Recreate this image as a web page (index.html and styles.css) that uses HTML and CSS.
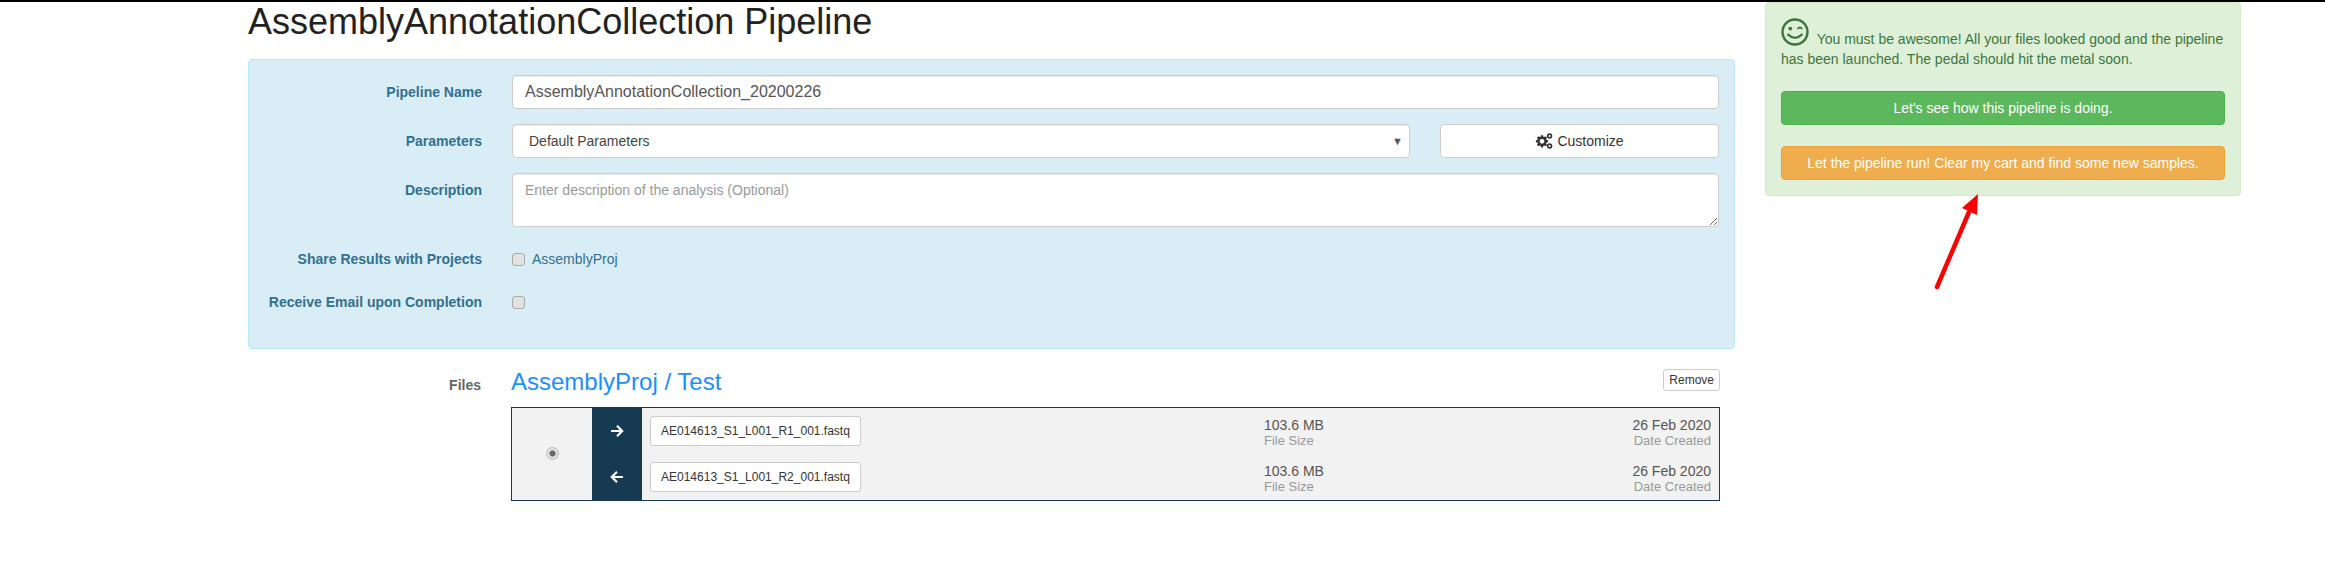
FILE: index.html
```html
<!DOCTYPE html>
<html>
<head>
  <title>AssemblyAnnotationCollection Pipeline</title>
  <link rel="stylesheet" href="styles.css">
</head>
<body>
  <div class="page">
    <div class="main">
      <h1>AssemblyAnnotationCollection Pipeline</h1>
      <form class="panel">
        <div class="row">
          <label>Pipeline Name</label>
          <input type="text" class="control name-input" value="AssemblyAnnotationCollection_20200226">
        </div>
        <div class="row">
          <label>Parameters</label>
          <div class="param-line">
            <div class="control select-box">Default Parameters<span class="caret">▼</span></div>
            <button type="button" class="customize">
              <svg class="gears" viewBox="0 0 18 16" width="18" height="16">
                <path fill="#333" fill-rule="evenodd" d="M6 2.2h2l.3 1.5 1 .4 1.3-.8 1.4 1.4-.8 1.3.4 1 1.5.3v2l-1.5.3-.4 1 .8 1.3-1.4 1.4-1.3-.8-1 .4-.3 1.5H6l-.3-1.5-1-.4-1.3.8L2 11.9l.8-1.3-.4-1L.9 9.3v-2l1.5-.3.4-1L2 4.7l1.4-1.4 1.3.8 1-.4zM7 5.9a2.4 2.4 0 1 0 0 4.8 2.4 2.4 0 0 0 0-4.8z"/>
                <circle cx="14.6" cy="3" r="1.9" fill="none" stroke="#333" stroke-width="1.6"/>
                <circle cx="14.6" cy="13" r="1.9" fill="none" stroke="#333" stroke-width="1.6"/>
              </svg>
              Customize
            </button>
          </div>
        </div>
        <div class="row">
          <label>Description</label>
          <textarea class="control" placeholder="Enter description of the analysis (Optional)"></textarea>
        </div>
        <div class="row check-row first-check">
          <label>Share Results with Projects</label>
          <div class="check-line"><span class="check"></span><span class="check-text">AssemblyProj</span></div>
        </div>
        <div class="row check-row">
          <label>Receive Email upon Completion</label>
          <div class="check-line"><span class="check"></span></div>
        </div>
      </form>

      <div class="files">
        <div class="files-label">Files</div>
        <div>
          <div class="files-head">
            <a class="project">AssemblyProj / Test</a>
            <button type="button" class="remove">Remove</button>
          </div>
          <div class="sample">
            <div class="pick"><span class="radio"></span></div>
            <div class="dirs">
              <svg viewBox="0 0 14 14" width="14" height="14"><path d="M1 7h11M7 1.8l5.2 5.2L7 12.2" fill="none" stroke="#fff" stroke-width="2.2"/></svg>
              <svg viewBox="0 0 14 14" width="14" height="14"><path d="M13 7H2M7 1.8L1.8 7 7 12.2" fill="none" stroke="#fff" stroke-width="2.2"/></svg>
            </div>
            <div class="reads">
              <div class="read">
                <span class="file-name">AE014613_S1_L001_R1_001.fastq</span>
                <div class="size"><b>103.6 MB</b><small>File Size</small></div>
                <div class="date"><b>26 Feb 2020</b><small>Date Created</small></div>
              </div>
              <div class="read">
                <span class="file-name">AE014613_S1_L001_R2_001.fastq</span>
                <div class="size"><b>103.6 MB</b><small>File Size</small></div>
                <div class="date"><b>26 Feb 2020</b><small>Date Created</small></div>
              </div>
            </div>
          </div>
        </div>
      </div>
    </div>

    <div class="side">
      <div class="alert">
        <p>
          <svg class="smile" viewBox="0 0 28 28" width="28" height="28">
            <circle cx="14" cy="14" r="12.5" fill="none" stroke="#3c763d" stroke-width="2.4"/>
            <circle cx="9.3" cy="10.6" r="1.9" fill="#3c763d"/>
            <path d="M16.5 10.8q2.4-2.6 4.8 0" fill="none" stroke="#3c763d" stroke-width="1.8"/>
            <path d="M7.2 16.6q6.8 6.4 13.6 0" fill="none" stroke="#3c763d" stroke-width="2.2" stroke-linecap="round"/>
          </svg>
          You must be awesome! All your files looked good and the pipeline has been launched. The pedal should hit the metal soon.
        </p>
        <button type="button" class="btn green">Let's see how this pipeline is doing.</button>
        <button type="button" class="btn orange">Let the pipeline run! Clear my cart and find some new samples.</button>
      </div>
    </div>
  </div>

  <svg class="red-arrow" viewBox="0 0 60 110" width="60" height="110">
    <path d="M6 102 L38 27" stroke="#f00" stroke-width="4.5" stroke-linecap="round" fill="none"/>
    <path d="M47 9 L46 30 L31 23 Z" fill="#f00"/>
  </svg>
</body>
</html>
```

FILE: styles.css
```css
* {
  box-sizing: border-box;
}

body {
  margin: 0;
  font-family: "Liberation Sans", Arial, sans-serif;
  font-size: 14px;
  color: #333;
  background: #fff;
  border-top: 2px solid #000;
  position: relative;
  overflow: hidden;
}

.page {
  display: flex;
  padding-left: 248px;
  gap: 30px;
  min-height: 571px;
}

.main {
  width: 1487px;
}

h1 {
  margin: 0 0 17px;
  font-size: 36px;
  font-weight: 400;
  line-height: 40px;
  color: #222;
}

.panel {
  height: 290px;
  padding: 15px;
  background: #d9edf7;
  border: 1px solid #bce8f1;
  border-radius: 4px;
}

.row {
  display: grid;
  grid-template-columns: 217px 1fr;
  column-gap: 31px;
  margin-bottom: 15px;
}

.row label {
  padding-top: 7px;
  font-weight: 700;
  line-height: 20px;
  text-align: right;
  color: #31708f;
  margin-right: -1px;
}

.control {
  display: block;
  width: 100%;
  height: 34px;
  padding: 6px 12px;
  font: 14px/20px "Liberation Sans", Arial, sans-serif;
  color: #555;
  background: #fff;
  border: 1px solid #ccc;
  border-radius: 4px;
  box-shadow: inset 0 1px 1px rgba(0, 0, 0, 0.075);
}

.name-input {
  font-size: 16px;
}

textarea.control {
  height: 54px;
}

textarea.control::placeholder {
  color: #999;
}

.param-line {
  display: flex;
  gap: 30px;
}

.select-box {
  width: 898px;
  padding: 6px 16px;
  color: #444;
  display: flex;
  justify-content: space-between;
  align-items: center;
}

.caret {
  font-size: 11px;
  color: #555;
  margin-right: -10px;
}

.customize {
  flex: 1;
  display: flex;
  align-items: center;
  justify-content: center;
  gap: 4px;
  font: 14px "Liberation Sans", Arial, sans-serif;
  color: #333;
  background: #fff;
  border: 1px solid #ccc;
  border-radius: 4px;
}

.check-row {
  margin-bottom: 0;
  height: 43px;
}

.first-check {
  margin-top: 22px;
}

.check-row label {
  padding-top: 0;
}

.check-line {
  display: flex;
  align-items: center;
  height: 20px;
}

.check {
  width: 13px;
  height: 13px;
  background: #e2e2e2;
  border: 1px solid #aaa;
  border-radius: 3px;
}

.check-text {
  margin-left: 7px;
  color: #31708f;
}

.files {
  display: grid;
  grid-template-columns: 233px 1209px;
  column-gap: 30px;
  padding-top: 20px;
}

.files-label {
  padding-top: 6px;
  font-weight: 700;
  color: #666;
  text-align: right;
  line-height: 20px;
}

.files-head {
  display: flex;
  justify-content: space-between;
  align-items: flex-start;
  height: 38px;
}

.project {
  font-size: 24px;
  line-height: 26px;
  color: #1890ff;
}

.remove {
  height: 22px;
  padding: 0 5px;
  font: 12px "Liberation Sans", Arial, sans-serif;
  color: #333;
  background: #fff;
  border: 1px solid #ccc;
  border-radius: 3px;
}

.sample {
  display: flex;
  height: 94px;
  background: #f2f2f2;
  border: 1px solid #153a52;
}

.pick {
  width: 80px;
  display: flex;
  align-items: center;
  justify-content: center;
}

.radio {
  width: 13px;
  height: 13px;
  margin-bottom: 1px;
  border-radius: 50%;
  border: 1px solid #bbb;
  background: radial-gradient(circle, #666 0, #666 2.5px, #e0e0e0 3.5px);
}

.dirs {
  width: 50px;
  display: flex;
  flex-direction: column;
  align-items: center;
  justify-content: space-around;
  background: #153a52;
}

.reads {
  flex: 1;
  padding: 8px 8px 0 8px;
}

.read {
  display: flex;
  height: 30px;
  margin-bottom: 16px;
  align-items: flex-start;
}

.file-name {
  width: 211px;
  height: 30px;
  padding: 0 10px;
  font-size: 12px;
  line-height: 28px;
  white-space: nowrap;
  background: #fff;
  border: 1px solid #ccc;
  border-radius: 3px;
}

.size {
  margin-left: 403px;
  padding-top: 1px;
}

.date {
  margin-left: auto;
  padding-top: 1px;
  text-align: right;
}

.read b,
.read small {
  display: block;
  font-weight: 400;
}

.read b {
  font-size: 14px;
  line-height: 16px;
  color: #555;
}

.read small {
  font-size: 13px;
  line-height: 16px;
  color: #999;
}

.side {
  width: 476px;
}

.alert {
  height: 194px;
  padding: 15px;
  background: #dff0d8;
  border: 1px solid #d6e9c6;
  border-radius: 4px;
  color: #3c763d;
}

.alert p {
  margin: 0 0 15px;
  line-height: 20px;
  height: 58px;
}

.smile {
  vertical-align: -2px;
  margin-right: 4px;
}

.btn {
  display: block;
  width: 100%;
  height: 34px;
  margin-bottom: 21px;
  font: 14px "Liberation Sans", Arial, sans-serif;
  color: #fff;
  border: 1px solid;
  border-radius: 4px;
}

.green {
  background: #5cb85c;
  border-color: #4cae4c;
}

.orange {
  background: #f0ad4e;
  border-color: #eea236;
}

/* annotation drawn on top of the screenshot */
.red-arrow {
  position: absolute;
  left: 1931px;
  top: 183px;
}
```
